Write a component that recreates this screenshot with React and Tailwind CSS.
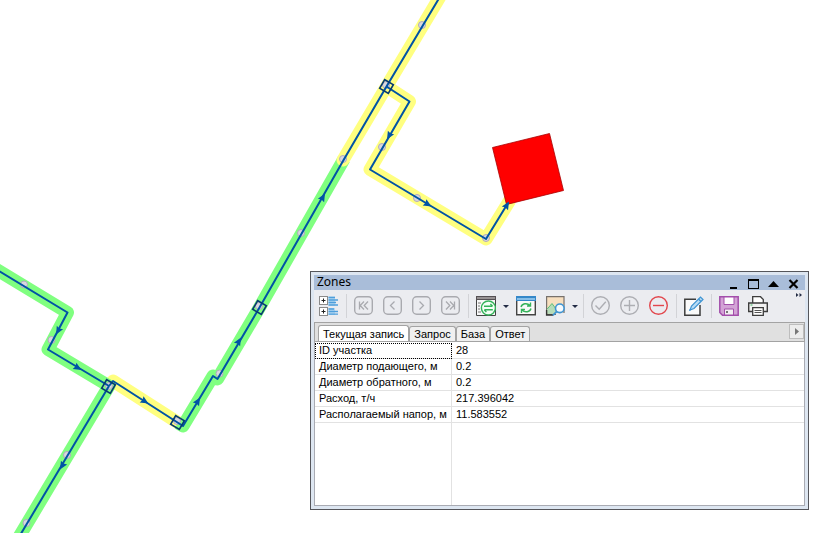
import { useState } from "react";

const tabs = ["Текущая запись", "Запрос", "База", "Ответ"];

const record = [
  { name: "ID участка", value: "28" },
  { name: "Диаметр подающего, м", value: "0.2" },
  { name: "Диаметр обратного, м", value: "0.2" },
  { name: "Расход, т/ч", value: "217.396042" },
  { name: "Располагаемый напор, м", value: "11.583552" },
];

/* ================= NETWORK DATA ================= */
const pipes = [
  "M-6 268 L67.5 312.5 L48 349.5 L109 386",
  "M109 386 L19 537",
  "M109 386 L113 381 L183 426 L213 376 L217.5 379 L259.5 307.5 L343 161 L386.5 86.5 L441 -5",
  "M386.5 86.5 L409.5 101.5 L370 169.5 L486 239 L508 203",
];

const arrows = [
  [58, 331, 119],
  [78, 368, 31],
  [62, 466, 121],
  [145, 401.5, 32],
  [198, 401, -59],
  [239, 341, -60],
  [323, 197, -60],
  [389, 136, 120],
  [428, 204.5, 31],
  [507, 205, -59],
];

const joints = [
  [24, 284.5],
  [51.5, 340],
  [67, 455],
  [26.5, 523],
  [109, 386],
  [177, 421],
  [219.5, 373.5],
  [259, 306],
  [301, 233],
  [343, 159],
  [386, 85],
  [422, 25],
  [382, 147],
  [417, 198],
  [486, 238],
];

const chambers = [
  [108.5, 386.5],
  [177.5, 422.5],
  [259.5, 307.5],
  [386.5, 86.5],
];

const NetworkMap = () => (
  <svg className="absolute inset-0 h-full w-full" fill="none">
    {/* zones */}
    <g strokeWidth="13" strokeLinejoin="round">
      <path d="M113 381 L177 422" stroke="#ffff80" strokeLinecap="round" />
      <path d="M-6 268 L67.5 312.5 L48 349.5 L109 386 L19 537" stroke="#80ff80" />
      <path d="M178 423 L183 426 L213 376 L217.5 379 L259.5 307.5 L344 159" stroke="#80ff80" />
      <path d="M343 160 L386.5 86.5 L441 -5" stroke="#ffff80" strokeLinecap="round" />
      <path d="M386.5 86.5 L409.5 101.5 L370 169.5 L486 239 L510 200" stroke="#ffff80" />
    </g>

    <g fill="#d8d8de" stroke="#b0aabc" strokeWidth="1">
      {joints.map(([x, y]) => (
        <circle key={`${x}-${y}`} cx={x} cy={y} r="3.5" />
      ))}
    </g>

    {/* consumer */}
    <path d="M492.5 147.5 L549.5 133.5 L563.5 190.5 L506.5 204.5 Z" fill="#ff0000" stroke="#a80000" strokeWidth="0.8" />

    <g stroke="#0053a5" strokeWidth="2" strokeLinejoin="round">
      {pipes.map((d) => (
        <path key={d} d={d} />
      ))}
    </g>
    <g fill="#0053a5">
      {arrows.map(([x, y, angle]) => (
        <path key={`${x}-${y}`} d="M4 0 L-4 -3.6 L-3 0 L-4 3.6 Z" transform={`translate(${x} ${y}) rotate(${angle})`} />
      ))}
    </g>
    <g stroke="#053a70" strokeWidth="1.6">
      {chambers.map(([x, y]) => (
        <rect key={`${x}-${y}`} x="-5" y="-5" width="10" height="10" transform={`translate(${x} ${y}) rotate(30)`} />
      ))}
    </g>
  </svg>
);

/* ================= TOOLBAR ================= */
const ToolButton = ({ label, children }) => (
  <button type="button" aria-label={label} className="flex h-8 w-[29px] items-center pl-[5px]">
    <svg width="20" height="20" viewBox="0 0 20 20" fill="none">
      {children}
    </svg>
  </button>
);

const NavButton = ({ label, d }) => (
  <ToolButton label={label}>
    <rect x="0.7" y="0.7" width="17.6" height="17.6" rx="4" stroke="#a9aaaf" strokeWidth="1.4" />
    <path d={d} stroke="#a9aaaf" strokeWidth="1.3" />
  </ToolButton>
);

const Drop = ({ label }) => (
  <button type="button" aria-label={label} className="flex h-8 w-[11px] items-center justify-center">
    <svg width="6" height="3" viewBox="0 0 6 3">
      <path d="M0 0H6L3 3Z" fill="#222b44" />
    </svg>
  </button>
);

const Separator = () => (
  <span className="flex h-6 w-1.5 justify-center">
    <span className="w-px bg-[#d2d3d7]" />
  </span>
);

const Toolbar = () => (
  <div className="flex h-8 items-center bg-[#ebecf0]">
    <ToolButton label="Структура">
      <g stroke="#8a8a8a">
        <rect x="0.5" y="0.5" width="8" height="8" fill="#fff" />
        <rect x="0.5" y="11.5" width="8" height="8" fill="#fff" />
      </g>
      <path d="M2.5 4.5H6.5M4.5 2.5V6.5M2.5 15.5H6.5M4.5 13.5V17.5" stroke="#222" />
      <path d="M9.5 0.5H16V9.5H9.5ZM9.5 12H16V19H9.5Z" fill="#b4d8f2" />
      <path d="M9.5 1.5H16M9.5 4H19M9.5 6.5H17M9.5 9H19M9.5 13H15M9.5 15.5H19M9.5 18.2H19" stroke="#4f9edb" strokeWidth="1.3" />
    </ToolButton>
    <Separator />
    <NavButton label="Первая запись" d="M5.5 5.5V13.5M10 5.5L6.2 9.5L10 13.5M14 5.5L10.2 9.5L14 13.5" />
    <NavButton label="Предыдущая запись" d="M11.5 5.5L7.5 9.5L11.5 13.5" />
    <NavButton label="Следующая запись" d="M7.5 5.5L11.5 9.5L7.5 13.5" />
    <NavButton label="Последняя запись" d="M13.5 5.5V13.5M9 5.5L12.8 9.5L9 13.5M5 5.5L8.8 9.5L5 13.5" />
    <Separator />
    <ToolButton label="Таблица">
      <path d="M0.5 0.5H19.5V19.5H0.5Z" fill="#f7f7f7" stroke="#444" />
      <path d="M0 0H20V4H0Z" fill="#555054" />
      <path d="M1 2H19" stroke="#b5afaf" strokeWidth="1.4" />
      <path d="M2 7H5M2 10H4M2 13H4M2 16H5" stroke="#777" />
      <circle cx="12.4" cy="12" r="7" fill="#f4fff6" stroke="#35b35a" strokeWidth="1.4" />
      <path d="M8 10.3H16.4M14.4 8.1L16.6 10.3M16.8 13.7H8.4M10.4 15.9L8.2 13.7" stroke="#35b35a" strokeWidth="1.4" />
    </ToolButton>
    <Drop label="Варианты таблицы" />
    <ToolButton label="Обновить">
      <path d="M0.7 0.7H19.3V18.8H0.7Z" fill="#fafafa" stroke="#444" strokeWidth="1.4" />
      <path d="M0 0H20V5H0Z" fill="#3588c9" />
      <path d="M1 3H19" stroke="#9dcdf0" strokeWidth="1.6" />
      <path d="M5 11C6 7.5 11 6.5 14 9.5M14.5 6.5V10H11M15 12.5C14 16 9 17 6 14M5.5 17V13.5H9" stroke="#35b35a" strokeWidth="1.4" />
    </ToolButton>
    <ToolButton label="Показать на карте">
      <path d="M1.6 0.6H19V18.4H1.6Z" fill="#f7dfbf" stroke="#77716c" strokeWidth="1.2" />
      <path d="M2.2 13L7 7.5L14 17.8H2.2Z" fill="#b5dcb9" />
      <path d="M2.2 13L7 7.5L11 13" stroke="#5fbf78" />
      <path d="M8 19H1.6V14" stroke="#333" strokeWidth="1.4" />
      <path d="M20 17H11V20H20Z" fill="#ebecf0" />
      <circle cx="14.8" cy="12.3" r="4.3" fill="#f4f9fd" stroke="#3f94d2" strokeWidth="1.6" />
      <path d="M11.8 15.4L7.8 19.4" stroke="#3f94d2" strokeWidth="1.8" />
    </ToolButton>
    <Drop label="Варианты показа" />
    <Separator />
    <ToolButton label="Применить">
      <circle cx="9.5" cy="9.5" r="8.8" stroke="#adaeb3" strokeWidth="1.4" />
      <path d="M4.5 9.5L8.2 13.2L14.8 5.8" stroke="#adaeb3" strokeWidth="1.4" />
    </ToolButton>
    <ToolButton label="Добавить">
      <circle cx="9.5" cy="9.5" r="8.8" stroke="#adaeb3" strokeWidth="1.4" />
      <path d="M4 9.5H15M9.5 4V15" stroke="#adaeb3" strokeWidth="1.4" />
    </ToolButton>
    <ToolButton label="Удалить">
      <circle cx="9.5" cy="9.5" r="8.8" stroke="#e2474d" strokeWidth="1.4" />
      <path d="M4 9.5H15" stroke="#e2474d" strokeWidth="1.4" />
    </ToolButton>
    <Separator />
    <ToolButton label="Редактировать">
      <path d="M12 3.2H0.8V19.2H16V9" fill="#fafafa" stroke="#3d3d3d" strokeWidth="1.5" />
      <path d="M6 14L7.5 10L16.5 1L19 3.5L10 12.5Z" fill="#b9dcf5" stroke="#3f94d2" strokeWidth="1.2" />
      <path d="M14.5 3L17 5.5M5.5 14.5L7 13" stroke="#3f94d2" strokeWidth="1.2" />
    </ToolButton>
    <Separator />
    <ToolButton label="Сохранить">
      <path d="M0.8 0.8H19.2V19.2H3.5L0.8 16.5Z" fill="#d3a3d6" stroke="#a34fab" strokeWidth="1.5" />
      <path d="M5 1H15V8.5H5Z" fill="#fff" stroke="#a34fab" />
      <path d="M5.5 19V13H14.5V19Z" fill="#f2eef2" stroke="#a34fab" />
      <path d="M7 15H9V17H7Z" fill="#777" />
    </ToolButton>
    <ToolButton label="Печать">
      <path d="M4.7 7V0.7H12.5L15.3 3.5V7" fill="#fff" stroke="#3d3d3d" strokeWidth="1.3" />
      <path d="M0.7 7H19.3V15.5H0.7Z" fill="#f2f2f2" stroke="#3d3d3d" strokeWidth="1.4" />
      <path d="M2.5 9H4.5" stroke="#35b35a" />
      <path d="M4.7 11.7H15.3V19.3H4.7Z" fill="#fff" stroke="#3d3d3d" strokeWidth="1.3" />
      <path d="M6.5 14.5H13.5M6.5 16.5H13.5" stroke="#555" />
    </ToolButton>
    <button type="button" aria-label="Ещё" className="ml-auto flex h-8 w-[9px] pt-[3px]">
      <svg width="6" height="4" viewBox="0 0 6 4">
        <path d="M0 0L2.5 2L0 4ZM3.5 0L6 2L3.5 4Z" fill="#222b44" />
      </svg>
    </button>
  </div>
);

const TitleBar = () => (
  <div className="flex h-[15px] items-start justify-between bg-[#a9bdd9] pl-[3px] pr-1.5">
    <h1 className="font-['Noto_Sans',sans-serif] text-[12px] leading-[14px]">Zones</h1>
    <div className="flex h-[15px] gap-[9px] pt-0.5">
      <button type="button" aria-label="Свернуть">
        <svg width="11" height="11" viewBox="0 0 11 11"><path d="M2 9H9V11H2Z" /></svg>
      </button>
      <button type="button" aria-label="Развернуть">
        <svg width="11" height="11" viewBox="0 0 11 11"><path fillRule="evenodd" d="M0 1H11V11H0ZM1 3V10H10V3Z" /></svg>
      </button>
      <button type="button" aria-label="Скрыть">
        <svg width="11" height="11" viewBox="0 0 11 11"><path d="M5.5 3L11 9H0Z" /></svg>
      </button>
      <button type="button" aria-label="Закрыть">
        <svg width="11" height="11" viewBox="0 0 11 11"><path d="M1.5 2L9.5 10M9.5 2L1.5 10" stroke="#000" strokeWidth="2.2" /></svg>
      </button>
    </div>
  </div>
);

const App = () => {
  const [active, setActive] = useState(0);

  return (
    <main className="relative min-h-screen overflow-hidden bg-white font-['Liberation_Sans',Arial,sans-serif] text-[11px] text-black">
      <NetworkMap />

      {/* ZONES WINDOW */}
      <section className="absolute left-[310px] top-[271px] w-[499px] border border-[#55565b] bg-[#dde6f1] p-[3px]">
        <TitleBar />
        <Toolbar />

        {/* TABS */}
        <div className="flex h-5 items-end border border-[#a3a3a3] bg-[#e0e0e0] pl-[3px]">
          {tabs.map((tab, i) => (
            <button
              key={tab}
              type="button"
              onClick={() => setActive(i)}
              className={`rounded-t-[3px] border border-b-0 border-[#a3a3a3] px-1 leading-[14px] whitespace-nowrap ${
                i === active ? "h-4 bg-white" : "h-[15px] bg-[#f0f0f0]"
              }`}
            >
              {tab}
            </button>
          ))}
          <button type="button" aria-label="Прокрутить вкладки" className="mb-0.5 ml-auto flex h-[15px] w-[15px] items-center justify-center border border-[#bdbdbd] bg-[#ececec]">
            <svg width="4" height="7" viewBox="0 0 4 7"><path d="M0 0L4 3.5L0 7Z" fill="#777" /></svg>
          </button>
        </div>

        {/* RECORD */}
        <div className="h-[164px] border border-t-0 border-[#a9abb3] bg-white pt-px">
          <table className="h-full w-full border-separate border-spacing-0">
            <tbody>
              {record.map((row, i) => (
                <tr key={row.name} className="h-4">
                  <th
                    scope="row"
                    className={`h-4 w-[137px] whitespace-nowrap border-b border-r border-[#e2e2e2] py-0 pl-1 pr-0 text-left font-normal leading-[15px] ${
                      i === 0 ? "outline-1 -outline-offset-1 outline-dotted outline-black" : ""
                    }`}
                  >
                    {row.name}
                  </th>
                  <td className="border-b border-[#e2e2e2] py-0 pl-1 leading-[15px]">{row.value}</td>
                </tr>
              ))}
              <tr>
                <td className="border-r border-[#e2e2e2]" />
                <td />
              </tr>
            </tbody>
          </table>
        </div>
      </section>
    </main>
  );
};

export default App;
